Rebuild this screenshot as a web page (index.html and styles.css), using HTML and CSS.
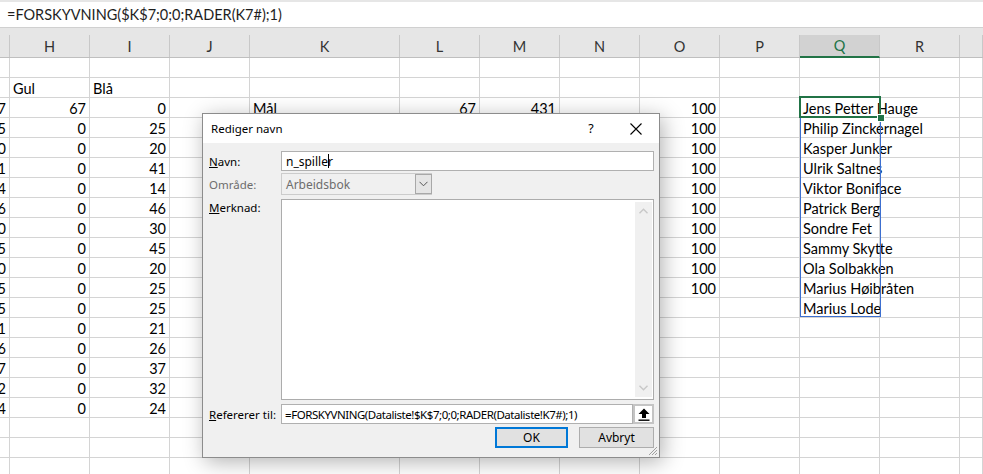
FILE: index.html
```html
<!DOCTYPE html>
<html lang="no">
<head>
<meta charset="utf-8">
<link rel="stylesheet" href="styles.css">
</head>
<body>
<div class="app">
  <div class="fbar"><span class="ftext">=FORSKYVNING($K$7;0;0;RADER(K7#);1)</span></div>
  <div class="hdr grid">
    <div></div><div>H</div><div>I</div><div>J</div><div>K</div><div>L</div><div>M</div><div>N</div><div>O</div><div>P</div><div class="selh">Q</div><div>R</div><div></div>
  </div>
  <div class="body grid">
    <div></div><div></div><div></div><div></div><div></div><div></div><div></div><div></div><div></div><div></div><div></div><div></div><div></div>
    <div></div><div>Gul</div><div>Blå</div><div></div><div></div><div></div><div></div><div></div><div></div><div></div><div></div><div></div><div></div>
    <div class="n">67</div><div class="n">67</div><div class="n">0</div><div></div><div>Mål</div><div class="n">67</div><div class="n">431</div><div></div><div class="n">100</div><div></div><div class="t">Jens Petter Hauge</div><div></div><div></div>
    <div class="n">25</div><div class="n">0</div><div class="n">25</div><div></div><div></div><div></div><div></div><div></div><div class="n">100</div><div></div><div class="t">Philip Zinckernagel</div><div></div><div></div>
    <div class="n">20</div><div class="n">0</div><div class="n">20</div><div></div><div></div><div></div><div></div><div></div><div class="n">100</div><div></div><div class="t">Kasper Junker</div><div></div><div></div>
    <div class="n">41</div><div class="n">0</div><div class="n">41</div><div></div><div></div><div></div><div></div><div></div><div class="n">100</div><div></div><div class="t">Ulrik Saltnes</div><div></div><div></div>
    <div class="n">14</div><div class="n">0</div><div class="n">14</div><div></div><div></div><div></div><div></div><div></div><div class="n">100</div><div></div><div class="t">Viktor Boniface</div><div></div><div></div>
    <div class="n">46</div><div class="n">0</div><div class="n">46</div><div></div><div></div><div></div><div></div><div></div><div class="n">100</div><div></div><div class="t">Patrick Berg</div><div></div><div></div>
    <div class="n">30</div><div class="n">0</div><div class="n">30</div><div></div><div></div><div></div><div></div><div></div><div class="n">100</div><div></div><div class="t">Sondre Fet</div><div></div><div></div>
    <div class="n">45</div><div class="n">0</div><div class="n">45</div><div></div><div></div><div></div><div></div><div></div><div class="n">100</div><div></div><div class="t">Sammy Skytte</div><div></div><div></div>
    <div class="n">20</div><div class="n">0</div><div class="n">20</div><div></div><div></div><div></div><div></div><div></div><div class="n">100</div><div></div><div class="t">Ola Solbakken</div><div></div><div></div>
    <div class="n">25</div><div class="n">0</div><div class="n">25</div><div></div><div></div><div></div><div></div><div></div><div class="n">100</div><div></div><div class="t">Marius Høibråten</div><div></div><div></div>
    <div class="n">25</div><div class="n">0</div><div class="n">25</div><div></div><div></div><div></div><div></div><div></div><div></div><div></div><div class="t">Marius Lode</div><div></div><div></div>
    <div class="n">21</div><div class="n">0</div><div class="n">21</div><div></div><div></div><div></div><div></div><div></div><div></div><div></div><div></div><div></div><div></div>
    <div class="n">26</div><div class="n">0</div><div class="n">26</div><div></div><div></div><div></div><div></div><div></div><div></div><div></div><div></div><div></div><div></div>
    <div class="n">37</div><div class="n">0</div><div class="n">37</div><div></div><div></div><div></div><div></div><div></div><div></div><div></div><div></div><div></div><div></div>
    <div class="n">32</div><div class="n">0</div><div class="n">32</div><div></div><div></div><div></div><div></div><div></div><div></div><div></div><div></div><div></div><div></div>
    <div class="n">24</div><div class="n">0</div><div class="n">24</div><div></div><div></div><div></div><div></div><div></div><div></div><div></div><div></div><div></div><div></div>
    <div></div><div></div><div></div><div></div><div></div><div></div><div></div><div></div><div></div><div></div><div></div><div></div><div></div>
    <div></div><div></div><div></div><div></div><div></div><div></div><div></div><div></div><div></div><div></div><div></div><div></div><div></div>
    <div></div><div></div><div></div><div></div><div></div><div></div><div></div><div></div><div></div><div></div><div></div><div></div><div></div>
  </div>

  <div class="range"></div>
  <div class="active"></div>
  <div class="handle"></div>

  <div class="dialog">
    <div class="titlebar">
      <span class="title">Rediger navn</span>
      <span class="help">?</span>
      <span class="close"><svg width="12" height="12" viewBox="0 0 12 12"><path d="M0.5 0.5L11.5 11.5M11.5 0.5L0.5 11.5" stroke="#000" stroke-width="1.1" fill="none"/></svg></span>
    </div>
    <div class="dbody">
      <div class="drow r-navn">
        <label class="lbl"><u>N</u>avn:</label>
        <div class="field">n_spille<span class="caret"></span>r</div>
      </div>
      <div class="drow r-omr">
        <label class="lbl dis">Område:</label>
        <div class="combo">
          <span class="ctext">Arbeidsbok</span>
          <span class="cbtn"><svg width="9" height="6" viewBox="0 0 9 6"><path d="M0.5 0.8L4.5 4.8L8.5 0.8" stroke="#555" stroke-width="1" fill="none"/></svg></span>
        </div>
      </div>
      <div class="drow r-merk">
        <label class="lbl top"><u>M</u>erknad:</label>
        <div class="area">
          <div class="scroll">
            <svg width="9" height="6" viewBox="0 0 9 6"><path d="M0.5 5.2L4.5 1.2L8.5 5.2" stroke="#c8c8c8" stroke-width="1.4" fill="none"/></svg>
            <svg width="9" height="6" viewBox="0 0 9 6"><path d="M0.5 0.8L4.5 4.8L8.5 0.8" stroke="#c8c8c8" stroke-width="1.4" fill="none"/></svg>
          </div>
        </div>
      </div>
      <div class="drow r-ref">
        <label class="lbl"><u>R</u>efererer til:</label>
        <div class="field ref">=FORSKYVNING(Dataliste!$K$7;0;0;RADER(Dataliste!K7#);1)</div>
        <span class="refbtn"><svg width="12" height="13" viewBox="0 0 12 13"><path d="M6 0.5L11.5 6H8V10H4V6H0.5Z" fill="#000"/><rect x="0.5" y="11.5" width="11" height="1.4" fill="#000"/></svg></span>
      </div>
      <div class="drow r-btn">
        <span class="btn ok">OK</span>
        <span class="btn">Avbryt</span>
      </div>
    </div>
    <svg class="grip" width="10" height="10" viewBox="0 0 10 10"><path d="M9 1L1 9M9 4L4 9M9 7L7 9" stroke="#a0a0a0" stroke-width="1"/></svg>
  </div>
</div>
</body>
</html>
```

FILE: styles.css
```css
html, body {
  margin: 0;
  padding: 0;
  background: #ffffff;
}
.app {
  position: relative;
  width: 983px;
  height: 474px;
  overflow: hidden;
  font-family: "Lato", "Open Sans", sans-serif;
  color: #000;
}
.fbar {
  box-sizing: border-box;
  height: 28px;
  border-top: 2px solid #e6e6e6;
  border-bottom: 1px solid #d0d0d0;
  background: #fff;
  display: flex;
  align-items: center;
  padding-left: 7px;
}
.ftext {
  font-size: 14.5px;
  color: #1e1e1e;
}
.grid {
  display: grid;
  grid-template-columns: 10px 80px 80px 80px 150px 80px 80px 80px 80px 80px 80px 80px 1fr;
}
.hdr {
  background: #e6e6e6;
  padding-top: 7px;
  grid-auto-rows: 22px;
  border-bottom: 1px solid #bfbfbf;
}
.hdr > div {
  border-right: 1px solid #c8c8c8;
  display: flex;
  align-items: center;
  justify-content: center;
  font-size: 14.5px;
  color: #333;
}
.hdr > div.selh {
  background: #d2d2d2;
  color: #217346;
  border-bottom: 2px solid #217346;
  margin-bottom: -1px;
}
.body {
  grid-auto-rows: 20px;
}
.body > div {
  box-sizing: border-box;
  border-right: 1px solid #d4d4d4;
  border-bottom: 1px solid #d4d4d4;
  display: flex;
  align-items: center;
  padding: 2px 3px 0;
  font-size: 14.5px;
  white-space: nowrap;
  overflow: hidden;
  min-width: 0;
}
.body > div.n {
  justify-content: flex-end;
}
.body > div.t {
  overflow: visible;
  position: relative;
  z-index: 1;
}
.range {
  position: absolute;
  left: 800px;
  top: 96px;
  width: 81px;
  height: 221px;
  border: 1px solid #3c6fd0;
  box-sizing: border-box;
  z-index: 2;
}
.active {
  position: absolute;
  left: 799px;
  top: 96px;
  width: 82px;
  height: 22px;
  border: 2px solid #217346;
  box-sizing: border-box;
  z-index: 3;
}
.handle {
  position: absolute;
  left: 877px;
  top: 114px;
  width: 6px;
  height: 6px;
  background: #217346;
  border: 1px solid #fff;
  z-index: 4;
}

/* dialog */
.dialog {
  position: absolute;
  left: 202px;
  top: 113px;
  width: 458px;
  height: 345px;
  box-sizing: border-box;
  border: 1px solid #8c8c8c;
  background: #f0f0f0;
  box-shadow: 3px 4px 20px rgba(0, 0, 0, 0.3);
  z-index: 10;
  font-family: "Noto Sans", "Open Sans", sans-serif;
  font-size: 11.5px;
  display: flex;
  flex-direction: column;
}
.titlebar {
  height: 29px;
  background: #fff;
  display: flex;
  align-items: center;
  flex: none;
}
.title {
  flex: 1;
  padding-left: 8px;
  font-size: 11.5px;
}
.help {
  width: 44px;
  text-align: center;
  font-size: 12.5px;
}
.close {
  width: 46px;
  display: flex;
  justify-content: center;
}
.dbody {
  padding: 8px 5px 0 6px;
  display: flex;
  flex-direction: column;
}
.drow {
  display: flex;
  align-items: center;
}
.lbl {
  width: 72px;
  flex: none;
}
.lbl.dis {
  color: #6d6d6d;
}
.lbl.top {
  align-self: flex-start;
  padding-top: 1px;
}
.r-navn { height: 20px; }
.r-omr { height: 22px; margin-top: 2px; }
.r-merk { height: 201px; margin-top: 4px; }
.r-ref { height: 20px; margin-top: 4px; }
.r-btn { height: 21px; margin-top: 3px; justify-content: flex-end; gap: 11px; }
.field {
  flex: 1;
  height: 100%;
  box-sizing: border-box;
  background: #fff;
  border: 1px solid #b0b0b0;
  display: flex;
  align-items: center;
  padding-left: 4px;
  white-space: nowrap;
  overflow: hidden;
  font-size: 12px;
}
.caret {
  display: inline-block;
  width: 1px;
  height: 14px;
  background: #000;
  margin-right: -1px;
}
.field.ref {
  padding-left: 3px;
  font-size: 11.5px;
  letter-spacing: -0.45px;
}
.combo {
  width: 151px;
  height: 100%;
  box-sizing: border-box;
  border: 1px solid #cccccc;
  background: #f0f0f0;
  display: flex;
  align-items: center;
}
.ctext {
  flex: 1;
  padding-left: 4px;
  color: #6d6d6d;
  font-size: 12px;
}
.cbtn {
  width: 17px;
  height: 20px;
  box-sizing: border-box;
  border: 1px solid #a8a8a8;
  background: #e5e5e5;
  display: flex;
  align-items: center;
  justify-content: center;
  margin-right: -1px;
}
.area {
  flex: 1;
  height: 100%;
  box-sizing: border-box;
  background: #fff;
  border: 1px solid #acacac;
  display: flex;
  justify-content: flex-end;
  padding: 2px 1px 2px 0;
}
.scroll {
  width: 17px;
  background: #f0f0f0;
  display: flex;
  flex-direction: column;
  justify-content: space-between;
  align-items: center;
  padding: 6px 0 6px;
}
.refbtn {
  width: 21px;
  height: 100%;
  box-sizing: border-box;
  border: 2px solid #c4c4c4;
  background: #fff;
  display: flex;
  align-items: center;
  justify-content: center;
}
.btn {
  height: 100%;
  box-sizing: border-box;
  width: 75px;
  border: 1px solid #adadad;
  background: #e1e1e1;
  display: flex;
  align-items: center;
  justify-content: center;
  font-size: 12px;
}
.btn.ok {
  width: 73px;
  border: 2px solid #0078d7;
}
.grip {
  position: absolute;
  right: 1px;
  bottom: 1px;
}
```
